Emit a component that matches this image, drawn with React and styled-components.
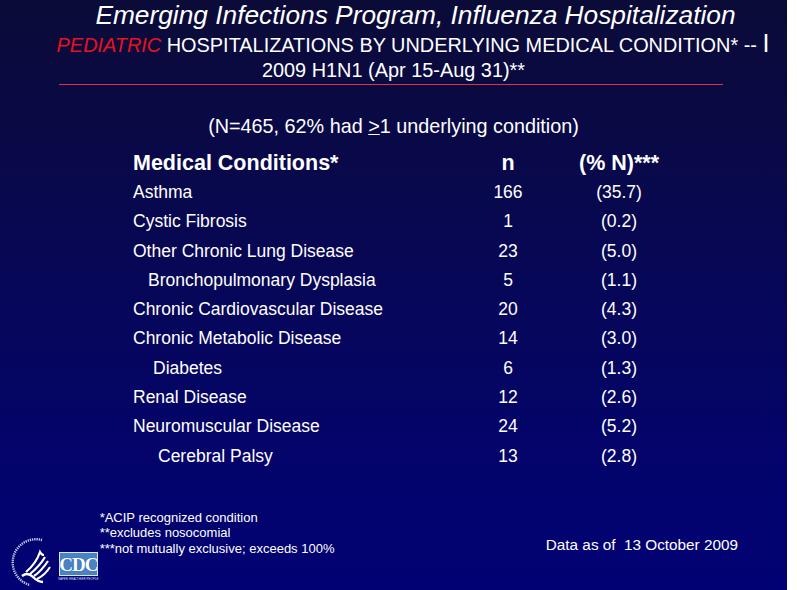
import React from "react"
import styled, { createGlobalStyle } from "styled-components"

const GlobalStyle = createGlobalStyle`
  body {
    margin: 0;
    background: #ffffff;
  }
`

const sans = `"Liberation Sans", Arial, sans-serif`

const Slide = styled.div`
  width: 787px;
  height: 590px;
  background: linear-gradient(180deg, #0b0b38 0%, #08084f 35%, #04046a 75%, #010174 100%);
  color: #ffffff;
  display: flex;
  flex-direction: column;
  overflow: hidden;
  font-family: ${sans};
`

const Header = styled.header`
  display: flex;
  flex-direction: column;
  align-items: center;
`

const Title = styled.h1`
  margin: 0;
  padding-left: 44px;
  font-style: italic;
  font-weight: normal;
  font-size: 26.3px;
  line-height: 30px;
  white-space: nowrap;
`

const SubLine = styled.div`
  margin-top: ${p => p.$top}px;
  padding-left: ${p => p.$shift}px;
  font-size: 19.9px;
  line-height: 22px;
  white-space: nowrap;
`

const Red = styled.em`
  color: #e8121c;
`

const TallBar = styled.span`
  font-size: 25px;
  line-height: 20px;
`

const Rule = styled.hr`
  align-self: flex-start;
  margin: 3px 0 0 59px;
  width: 664px;
  border: 0;
  height: 1px;
  background: #e0303c;
`

const Summary = styled.p`
  margin: 30px 0 0;
  text-align: center;
  font-size: 19.8px;
  line-height: 22px;
`

const Table = styled.div`
  margin: 14px 0 0 133px;
  display: grid;
  grid-template-columns: 330px 90px 132px;
`

const HeadCell = styled.div`
  font-weight: bold;
  font-size: 21.5px;
  line-height: 24px;
  text-align: ${p => (p.$center ? "center" : "left")};
  padding-bottom: 3px;
`

const Cell = styled.div`
  font-size: 17.5px;
  line-height: 29.3px;
  text-align: ${p => (p.$center ? "center" : "left")};
  padding-left: ${p => p.$indent || 0}px;
`

const Footer = styled.footer`
  margin-top: auto;
  display: flex;
  align-items: flex-end;
  padding-left: 8px;
`

const HhsMark = styled.svg`
  display: block;
  margin-bottom: 1px;
`

const CdcBlock = styled.div`
  margin: 0 0 9px 4px;
  display: flex;
  flex-direction: column;
  align-items: center;
`

const CdcBox = styled.div`
  width: 37px;
  height: 22px;
  background: #4a82c4;
  border: 1px solid #d8e6f5;
  display: flex;
  align-items: center;
  justify-content: center;
  font-family: "Liberation Serif", "Times New Roman", serif;
  font-weight: bold;
  font-size: 19px;
  line-height: 19px;
  letter-spacing: -1px;
  color: #ffffff;
  text-shadow: 0 0 1px #1d4f96;
`

const CdcTag = styled.span`
  margin-top: 1px;
  font-size: 3px;
  line-height: 4px;
  color: #d5e2f3;
  white-space: nowrap;
`

const Notes = styled.div`
  margin: 0 0 34px 1px;
  font-size: 13px;
  line-height: 15.5px;
`

const DataAsOf = styled.div`
  margin: 0 0 36px auto;
  padding-right: 49px;
  font-size: 15.3px;
  white-space: pre;
`

const rows = [
  ["Asthma", "166", "(35.7)", 0],
  ["Cystic Fibrosis", "1", "(0.2)", 0],
  ["Other Chronic Lung Disease", "23", "(5.0)", 0],
  ["Bronchopulmonary Dysplasia", "5", "(1.1)", 15],
  ["Chronic Cardiovascular Disease", "20", "(4.3)", 0],
  ["Chronic Metabolic Disease", "14", "(3.0)", 0],
  ["Diabetes", "6", "(1.3)", 20],
  ["Renal Disease", "12", "(2.6)", 0],
  ["Neuromuscular Disease", "24", "(5.2)", 0],
  ["Cerebral Palsy", "13", "(2.8)", 25],
]

// HHS seal: dotted ring of lettering and the striped eagle profile
const HhsLogo = () => (
  <HhsMark width="46" height="53" viewBox="0 0 46 53">
    <path d="M34 4 A23 23 0 1 0 22 49" fill="none" stroke="#c8cfe8" strokeWidth="2.4" strokeDasharray="1.3 0.9" />
    <path d="M14 40 C18 37 22 38 25 41 C28 44 31 46 35 46" fill="none" stroke="#fff" strokeWidth="2.4" />
    <path d="M18 36 C24 31 29 25 32 16 C33 18 34 19 36 19" fill="none" stroke="#fff" strokeWidth="2.2" />
    <path d="M22 38 C28 33 33 28 37 21" fill="none" stroke="#fff" strokeWidth="2.2" />
    <path d="M26 40 C32 36 36 31 40 25" fill="none" stroke="#fff" strokeWidth="2.2" />
    <path d="M29 43 C35 40 39 36 42 31" fill="none" stroke="#fff" strokeWidth="2" />
  </HhsMark>
)

export default function App() {
  return (
    <>
      <GlobalStyle />
      <Slide>
        <Header>
          <Title>Emerging Infections Program, Influenza Hospitalization</Title>
          <SubLine $top={3} $shift={39}>
            <Red>PEDIATRIC</Red> HOSPITALIZATIONS BY UNDERLYING MEDICAL CONDITION* -- <TallBar>I</TallBar>
          </SubLine>
          <SubLine $top={3} $shift={-7}>2009 H1N1 (Apr 15-Aug 31)**</SubLine>
          <Rule />
        </Header>

        <Summary>
          (N=465, 62% had <u>&gt;</u>1 underlying condition)
        </Summary>

        <Table>
          <HeadCell>Medical Conditions*</HeadCell>
          <HeadCell $center>n</HeadCell>
          <HeadCell $center>(% N)***</HeadCell>
          {rows.map(([name, n, pct, indent]) => (
            <React.Fragment key={name}>
              <Cell $indent={indent}>{name}</Cell>
              <Cell $center>{n}</Cell>
              <Cell $center>{pct}</Cell>
            </React.Fragment>
          ))}
        </Table>

        <Footer>
          <HhsLogo />
          <CdcBlock>
            <CdcBox>CDC</CdcBox>
            <CdcTag>SAFER·HEALTHIER·PEOPLE</CdcTag>
          </CdcBlock>
          <Notes>
            *ACIP recognized condition<br />
            **excludes nosocomial<br />
            ***not mutually exclusive; exceeds 100%
          </Notes>
          <DataAsOf>Data as of  13 October 2009</DataAsOf>
        </Footer>
      </Slide>
    </>
  )
}
